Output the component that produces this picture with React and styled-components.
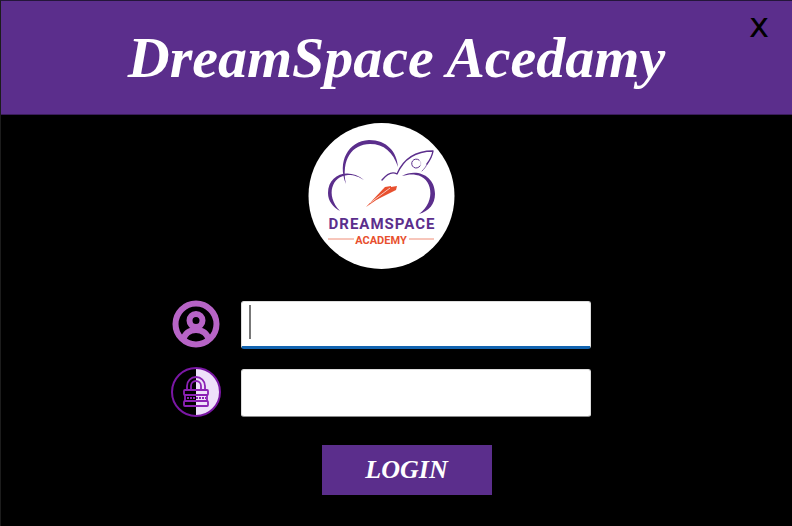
import React from "react";
import styled, { createGlobalStyle } from "styled-components";

const PURPLE = "#5b2e8c";
const ORANGE = "#e8502f";

const GlobalStyle = createGlobalStyle`
  *, *::before, *::after { box-sizing: border-box; }
  html { height: 100%; background: #000; }
  body { margin: 0; height: 100%; font-family: "Liberation Sans", Arial, sans-serif; }
  #root { height: 100%; }
`;

const Window = styled.div`
  display: flex;
  flex-direction: column;
  min-height: 100%;
  background: #000;
  border-top: 1px solid #24163a;
  border-left: 1px solid #1c1c1c;
`;

const Header = styled.header`
  display: grid;
  grid-template-columns: 66px 1fr 66px;
  height: 114px;
  background: ${PURPLE};
  border-bottom: 1px solid #3a1d5a;
`;

const Title = styled.h1`
  grid-column: 2;
  align-self: center;
  margin: 0;
  color: #fff;
  font: italic bold 58px/64px "Monotype Corsiva", "Liberation Serif", serif;
  text-align: center;
  white-space: nowrap;
`;

const CloseButton = styled.button`
  align-self: start;
  justify-self: center;
  width: 36px;
  height: 36px;
  margin-top: 6px;
  padding: 0;
  border: 0;
  background: transparent;
  color: #000;
  font: 34px/36px "DejaVu Sans", sans-serif;
  cursor: pointer;
`;

const Content = styled.main`
  display: flex;
  flex-direction: column;
  align-items: center;
  padding: 7px 32px 24px 0;
`;

const Logo = styled.svg`
  width: 148px;
  height: 148px;
`;

const WordMark = styled.text`
  fill: ${PURPLE};
  font: bold 15px "Roboto", sans-serif;
  letter-spacing: 1px;
`;

const SubMark = styled.text`
  fill: ${ORANGE};
  font: bold 11px "Roboto", sans-serif;
`;

const LoginForm = styled.form`
  display: flex;
  flex-direction: column;
  gap: 20px;
  width: 420px;
  max-width: 100%;
  margin-top: 31px;
`;

const Field = styled.label`
  display: grid;
  grid-template-columns: 50px 1fr;
  align-items: center;
  gap: 20px;
`;

const FieldIcon = styled.svg`
  width: 50px;
  height: 50px;
  margin: -2px 0 0;
`;

const TextBox = styled.input`
  width: 100%;
  height: 48px;
  padding: 4px 8px;
  border: 1px solid #ddd;
  border-bottom: ${(p) => (p.$active ? "3px solid #1264b0" : "1px solid #8a8a8a")};
  border-radius: 3px;
  outline: 0;
  background: ${(p) =>
    p.$active
      ? "linear-gradient(#777, #777) 7px 3px / 2px 34px no-repeat #fff"
      : "#fff"};
  caret-color: ${(p) => (p.$active ? "transparent" : "#000")};
  font: 24px "Liberation Sans", Arial, sans-serif;
`;

const Actions = styled.div`
  display: flex;
  justify-content: center;
  margin-top: 8px;
  padding-left: 52px;
`;

const LoginButton = styled.button`
  width: 170px;
  height: 50px;
  padding: 0;
  border: 0;
  background: ${PURPLE};
  color: #fff;
  font: italic bold 26px/50px "Liberation Serif", serif;
  cursor: pointer;
`;

function AcademyLogo() {
  return (
    <Logo viewBox="-1 0 148 148" role="img" aria-label="DreamSpace Academy">
      <circle cx="73.5" cy="74" r="73" fill="#fff" />
      <g fill={PURPLE}>
        <path d="M38 62C29 40 40 19 61 18C79 18 89 30 90 45C85 30 76 22 62 22C44 22 33 38 38 62Z" />
        <path d="M56 58C40 45 20 53 20 71C20 79 25 85 32 89C17 73 24 54 40 53C47 53 51 55 56 58Z" />
        <path d="M94 54C108 46 127 53 127 72C127 82 121 89 111 92C129 79 124 55 108 53C103 52 99 53 94 54Z" />
      </g>
      <g fill="none" stroke={PURPLE} strokeLinecap="round" strokeLinejoin="round">
        <path d="M74 58C79 52 84 49 89 52C95 38 106 29 125 29C124 35 122 38 119 42" strokeWidth="1.4" />
        <path d="M119 42C118 45 116 47 114 49" strokeWidth="0.7" />
        <path d="M111 38a4.5 4.5 0 1 0 1 6" strokeWidth="1" />
        <path d="M111 38a4.5 4.5 0 0 1 1 6" strokeWidth="0.5" opacity="0.5" />
      </g>
      <g fill={ORANGE}>
        <path d="M58 85L77 65L83 64L83 68Z" />
        <path d="M68 78L83 65L89 64L88 68Z" />
      </g>
      <path d="M62 81L82 66" stroke="#fff" strokeWidth="0.7" />
      <WordMark x="74" y="107" textAnchor="middle">DREAMSPACE</WordMark>
      <path d="M20 117H46M101 117H126" stroke={ORANGE} strokeWidth="1" opacity="0.65" />
      <SubMark x="73" y="122" textAnchor="middle">ACADEMY</SubMark>
    </Logo>
  );
}

function UserIcon() {
  return (
    <FieldIcon viewBox="0 0 50 50" fill="none" stroke="#b764c6" aria-hidden="true">
      <circle cx="25" cy="25" r="20.5" strokeWidth="6" />
      <circle cx="25" cy="21.5" r="6.5" strokeWidth="6" />
      <path d="M12 41C14 34 19 31 25 31S36 34 38 41" strokeWidth="6" />
    </FieldIcon>
  );
}

function LockIcon() {
  return (
    <FieldIcon viewBox="0 0 50 50" fill="none" stroke="#8c22b5" aria-hidden="true">
      <path d="M25 1A24 24 0 0 1 25 49Z" fill="#eee0fa" stroke="none" />
      <circle cx="25" cy="25" r="24" strokeWidth="2" stroke="#7a17a4" />
      <g strokeWidth="1.8">
        <path d="M16 23V19a9 9 0 0 1 18 0v4M20 23V19a5 5 0 0 1 10 0v4" />
        <rect x="13" y="23" width="24" height="5" rx="1" />
        <path d="M14 28V34M36 28V34" />
        <rect x="13" y="34" width="24" height="5" rx="1" />
        <path d="M16 31H35" strokeDasharray="2 1" />
      </g>
    </FieldIcon>
  );
}

export default function App() {
  return (
    <>
      <GlobalStyle />
      <Window>
        <Header>
          <Title>DreamSpace Acedamy</Title>
          <CloseButton type="button" aria-label="Close">x</CloseButton>
        </Header>
        <Content>
          <AcademyLogo />
          <LoginForm onSubmit={(e) => e.preventDefault()}>
            <Field>
              <UserIcon />
              <TextBox $active type="text" aria-label="Username" />
            </Field>
            <Field>
              <LockIcon />
              <TextBox type="password" aria-label="Password" />
            </Field>
            <Actions>
              <LoginButton type="submit">LOGIN</LoginButton>
            </Actions>
          </LoginForm>
        </Content>
      </Window>
    </>
  );
}
